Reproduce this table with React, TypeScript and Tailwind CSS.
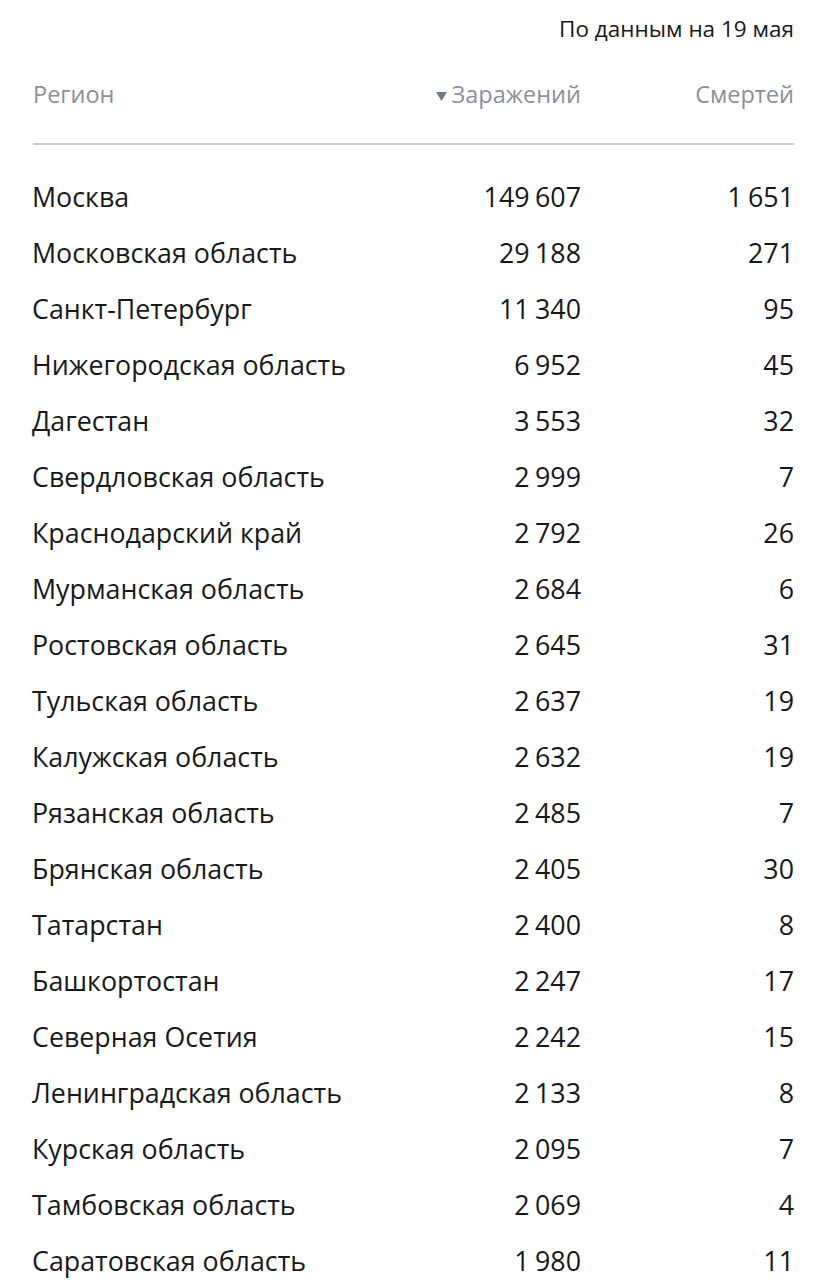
const ROWS: readonly [string, string, string][] = [
  ["Москва", "149 607", "1 651"],
  ["Московская область", "29 188", "271"],
  ["Санкт-Петербург", "11 340", "95"],
  ["Нижегородская область", "6 952", "45"],
  ["Дагестан", "3 553", "32"],
  ["Свердловская область", "2 999", "7"],
  ["Краснодарский край", "2 792", "26"],
  ["Мурманская область", "2 684", "6"],
  ["Ростовская область", "2 645", "31"],
  ["Тульская область", "2 637", "19"],
  ["Калужская область", "2 632", "19"],
  ["Рязанская область", "2 485", "7"],
  ["Брянская область", "2 405", "30"],
  ["Татарстан", "2 400", "8"],
  ["Башкортостан", "2 247", "17"],
  ["Северная Осетия", "2 242", "15"],
  ["Ленинградская область", "2 133", "8"],
  ["Курская область", "2 095", "7"],
  ["Тамбовская область", "2 069", "4"],
  ["Саратовская область", "1 980", "11"],
];

export default function App() {
  return (
    <div
      className="h-[1280px] overflow-hidden bg-white pl-[32px] pr-[32px] text-[#18181b]"
      style={{ fontFamily: '"Open Sans", "Noto Sans", sans-serif' }}
    >
      <div className="flex h-[40px] items-end justify-end text-[22.5px] leading-none">
        По данным на 19 мая
      </div>
      <div className="flex h-[103px] items-center pt-[7px] text-[23.5px] text-[#8c909b]">
        <div className="flex-1 pl-[1px]">Регион</div>
        <div className="flex items-center gap-[5px]">
          <svg width="11" height="9" viewBox="0 0 11 9" className="mt-[3px]">
            <path d="M0 0H11L5.5 9Z" fill="#737886" />
          </svg>
          <span>Заражений</span>
        </div>
        <div className="w-[213px] text-right">Смертей</div>
      </div>
      <div className="ml-[1px] h-[2px] bg-[#c9cace]" />
      <div className="pt-[24px]">
        {ROWS.map(([name, cases, deaths]) => (
          <div key={name} className="flex h-[56px] items-center text-[26.8px]">
            <div className="flex-1">{name}</div>
            <div className="text-right [word-spacing:-1.5px]">{cases}</div>
            <div className="w-[213px] text-right [word-spacing:-1.5px]">{deaths}</div>
          </div>
        ))}
      </div>
    </div>
  );
}
